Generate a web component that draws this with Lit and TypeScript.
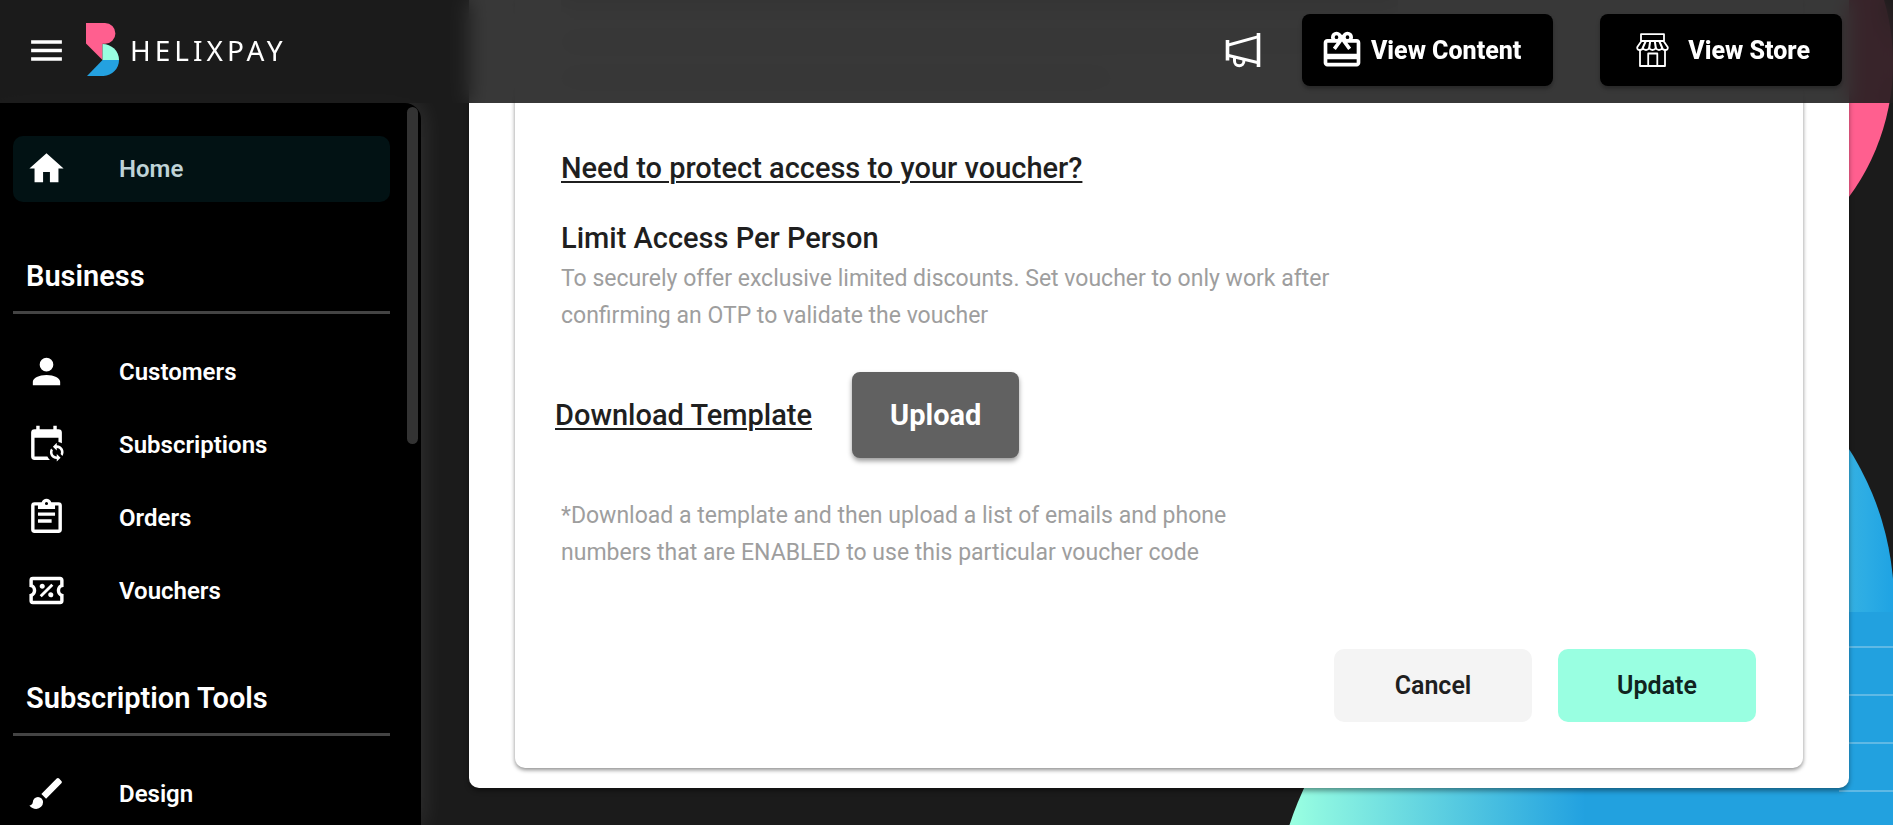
import { LitElement, html, css, svg } from "lit";
import { customElement } from "lit/decorators.js";
import { classMap } from "lit/directives/class-map.js";

interface NavItem {
  label: string;
  icon: string;
  active?: boolean;
}

interface NavSection {
  title: string;
  items: NavItem[];
}

const ICONS = {
  menu: "M3,6H21V8H3V6M3,11H21V13H3V11M3,16H21V18H3V16Z",
  home: "M10,20V14H14V20H19V12H22L12,3L2,12H5V20H10Z",
  account:
    "M12,4A4,4 0 0,1 16,8A4,4 0 0,1 12,12A4,4 0 0,1 8,8A4,4 0 0,1 12,4M12,14C16.42,14 20,15.79 20,18V20H4V18C4,15.79 7.58,14 12,14Z",
  calendarSync:
    "M18,11V12.5C21.19,12.5 23.09,16.05 21.33,18.71L20.24,17.62C21.06,15.96 19.85,14 18,14V15.5L15.75,13.25L18,11M18,22V20.5C14.81,20.5 12.91,16.95 14.67,14.29L15.76,15.38C14.94,17.04 16.15,19 18,19V17.5L20.25,19.75L18,22M19,3H18V1H16V3H8V1H6V3H5A2,2 0 0,0 3,5V19A2,2 0 0,0 5,21H14C13.36,20.45 12.86,19.77 12.5,19H5V8H19V10.59C19.71,10.7 20.39,10.94 21,11.31V5A2,2 0 0,0 19,3Z",
  clipboard:
    "M19,3H14.82C14.4,1.84 13.3,1 12,1C10.7,1 9.6,1.84 9.18,3H5A2,2 0 0,0 3,5V19A2,2 0 0,0 5,21H19A2,2 0 0,0 21,19V5A2,2 0 0,0 19,3M12,2.9A0.9,0.9 0 0,1 12.9,3.8A0.9,0.9 0 0,1 12,4.7A0.9,0.9 0 0,1 11.1,3.8A0.9,0.9 0 0,1 12,2.9M7,7H17V5H19V19H5V5H7V7M7,9H17V11H7V9M7,13H15V15H7V13Z",
  voucher:
    "M14.8,8L16,9.2L9.2,16L8,14.8L14.8,8M4,4H20C21.11,4 22,4.89 22,6V10A2,2 0 0,0 20,12A2,2 0 0,0 22,14V18A2,2 0 0,1 20,20H4A2,2 0 0,1 2,18V14C3.11,14 4,13.11 4,12A2,2 0 0,0 2,10V6A2,2 0 0,1 4,4M4,6V8.54C5.24,9.26 6,10.57 6,12C6,13.43 5.24,14.75 4,15.46V18H20V15.46C18.76,14.74 18,13.43 18,12C18,10.57 18.76,9.25 20,8.54V6H4M9.5,8C10.33,8 11,8.67 11,9.5C11,10.33 10.33,11 9.5,11C8.67,11 8,10.33 8,9.5C8,8.67 8.67,8 9.5,8M14.5,13C15.33,13 16,13.67 16,14.5A1.5,1.5 0 0,1 14.5,16C13.67,16 13,15.33 13,14.5A1.5,1.5 0 0,1 14.5,13Z",
  brush:
    "M20.71,4.63L19.37,3.29C19,2.9 18.35,2.9 17.96,3.29L9,12.25L11.75,15L20.71,6.04C21.1,5.65 21.1,5 20.71,4.63M7,14A3,3 0 0,0 4,17C4,18.31 2.84,19 2,19C2.92,20.22 4.5,21 6,21A4,4 0 0,0 10,17A3,3 0 0,0 7,14Z",
  gift: "M20,14H4V8H9.08L7,10.83L8.62,12L11,8.76L12,7.4L13,8.76L15.38,12L17,10.83L14.92,8H20M20,19H4V17H20M9,4A1,1 0 0,1 10,5A1,1 0 0,1 9,6A1,1 0 0,1 8,5A1,1 0 0,1 9,4M15,4A1,1 0 0,1 16,5A1,1 0 0,1 15,6A1,1 0 0,1 14,5A1,1 0 0,1 15,4M20,6H17.82C17.93,5.69 18,5.35 18,5A3,3 0 0,0 15,2C13.95,2 13.04,2.54 12.5,3.35L12,4L11.5,3.34C10.96,2.54 10.05,2 9,2A3,3 0 0,0 6,5C6,5.35 6.07,5.69 6.18,6H4C2.89,6 2,6.89 2,8V19C2,20.11 2.89,21 4,21H20C21.11,21 22,20.11 22,19V8C22,6.89 21.11,6 20,6Z",
};

const icon = (path: string) => html`
  <svg class="icon" viewBox="0 0 24 24" aria-hidden="true"><path d=${path} /></svg>
`;

const SECTIONS: NavSection[] = [
  { title: "", items: [{ label: "Home", icon: ICONS.home, active: true }] },
  {
    title: "Business",
    items: [
      { label: "Customers", icon: ICONS.account },
      { label: "Subscriptions", icon: ICONS.calendarSync },
      { label: "Orders", icon: ICONS.clipboard },
      { label: "Vouchers", icon: ICONS.voucher },
    ],
  },
  { title: "Subscription Tools", items: [{ label: "Design", icon: ICONS.brush }] },
];

@customElement("app-backdrop")
class AppBackdrop extends LitElement {
  static styles = css`
    :host {
      display: block;
    }
    .art {
      display: block;
      width: 640px;
      height: 840px;
    }
  `;

  render() {
    return html`
      <svg class="art" viewBox="0 0 640 840" aria-hidden="true">
        <defs>
          <linearGradient id="pool" gradientUnits="userSpaceOnUse" x1="40" y1="0" x2="332" y2="0">
            <stop offset="0" stop-color="#99ffe1" />
            <stop offset="0.08" stop-color="#8ef6e1" />
            <stop offset="1" stop-color="#22a1e0" />
          </linearGradient>
          <linearGradient id="dome" gradientUnits="userSpaceOnUse" x1="596" y1="0" x2="640" y2="0">
            <stop offset="0" stop-color="#34b0e2" />
            <stop offset="0.4" stop-color="#2cace4" />
            <stop offset="1" stop-color="#1fa3e3" />
          </linearGradient>
        </defs>
        <circle cx="414" cy="63" r="226" fill="#ff5f8f" />
        <circle cx="355" cy="603" r="286" fill="url(#dome)" />
        <circle cx="322" cy="917" r="300" fill="url(#pool)" />
        <rect x="331" y="612" width="309" height="228" fill="#22a1df" />
        ${[647, 695, 743, 791].map(
          (y) => svg`<rect x="586" y=${y - 1} width="54" height="2" fill="#5fb9e5" />`
        )}
      </svg>
    `;
  }
}

@customElement("app-sidebar")
class AppSidebar extends LitElement {
  static styles = css`
    :host {
      display: block;
      position: relative;
      overflow: hidden;
      background: #000;
      border-top-right-radius: 16px;
      box-shadow: 0 0 24px rgba(255, 255, 255, 0.12);
    }
    .nav {
      padding: 33px 31px 0 13px;
    }
    .title {
      margin: 54px 0 25px;
      padding: 0 13px 15px;
      border-bottom: 3px solid #444;
      color: #fff;
      font-size: 29px;
      font-weight: 600;
      line-height: 40px;
    }
    .list {
      display: grid;
      gap: 7px;
      margin: 0;
      padding: 0;
      list-style: none;
    }
    .item {
      display: flex;
      align-items: center;
      gap: 52px;
      height: 65px;
      padding: 0 13px 1px;
      border-radius: 10px;
      color: #fff;
      font-size: 24px;
      font-weight: 600;
      text-decoration: none;
    }
    .item.active {
      background: #021214;
    }
    .item.active .label {
      color: #bfd3d7;
    }
    .icon {
      flex: none;
      width: 41px;
      height: 41px;
      fill: #fff;
    }
    .thumb {
      position: absolute;
      top: 4px;
      right: 3px;
      width: 11px;
      height: 337px;
      border-radius: 6px;
      background: #333;
    }
  `;

  render() {
    return html`
      <nav class="nav">
        ${SECTIONS.map(
          (section) => html`
            ${section.title ? html`<h2 class="title">${section.title}</h2>` : ""}
            <ul class="list">
              ${section.items.map(
                (item) => html`
                  <li>
                    <a class=${classMap({ item: true, active: !!item.active })} href="#">
                      ${icon(item.icon)}<span class="label">${item.label}</span>
                    </a>
                  </li>
                `
              )}
            </ul>
          `
        )}
      </nav>
      <div class="thumb"></div>
    `;
  }
}

@customElement("app-header")
class AppHeader extends LitElement {
  static styles = css`
    :host {
      display: flex;
      align-items: center;
      box-sizing: border-box;
      height: 103px;
      padding: 0 51px 3px 26px;
      background: rgba(27, 27, 27, 0.873);
      backdrop-filter: blur(10px);
      color: #fff;
    }
    button {
      padding: 0;
      border: 0;
      background: none;
      color: inherit;
      font: inherit;
      cursor: pointer;
    }
    .icon {
      display: block;
      width: 41px;
      height: 41px;
      fill: currentColor;
    }
    .brand {
      display: flex;
      align-items: center;
      gap: 10px;
      margin: 0 auto 0 19px;
      color: #fff;
      text-decoration: none;
    }
    .mark {
      width: 34px;
      height: 54px;
    }
    .name {
      font-family: "Noto Sans", sans-serif;
      font-size: 28px;
      line-height: 36px;
      letter-spacing: 4px;
    }
    .news {
      margin-right: 41px;
    }
    .horn {
      display: block;
      width: 36px;
      height: 36px;
    }
    .actions {
      display: flex;
      gap: 47px;
    }
    .action {
      display: flex;
      align-items: center;
      height: 72px;
      border-radius: 8px;
      background: #000;
      box-shadow: 0 3px 4px rgba(0, 0, 0, 0.3);
      font-size: 25px;
      font-weight: 800;
    }
    .content {
      gap: 7px;
      padding: 0 32px 0 18px;
    }
    .content .icon {
      width: 44px;
      height: 44px;
    }
    .store {
      gap: 19px;
      padding: 0 32px 0 36px;
    }
    .shop {
      width: 33px;
      height: 34px;
    }
  `;

  render() {
    return html`
      <button aria-label="Menu">${icon(ICONS.menu)}</button>
      <a class="brand" href="#">
        <svg class="mark" viewBox="0 0 34 54" aria-hidden="true">
          <path d="M0 0H19A10.400 10.400 0 0 1 19 20.800H16.500V37L0 20.500Z" fill="#ff5f8f" />
          <path d="M16.500 21A16.300 16 0 0 1 33 37H16.500Z" fill="#99ffe1" />
          <path d="M16.500 37H33A16.300 16 0 0 1 17.500 53H1Z" fill="#24a1e0" />
        </svg>
        <span class="name">HELIXPAY</span>
      </a>
      <button class="news" aria-label="Announcements">
        <svg class="horn" viewBox="0 0 36 36" fill="none" stroke="#fff" aria-hidden="true">
          <path d="M2.500 8V28.500M33.500 1V35" stroke-width="3.600" />
          <path d="M2.500 13.200L33.500 4.600M2.500 23.200L33.500 30.800" stroke-width="3" />
          <path d="M9.500 25V29A4.700 4.700 0 0 0 18.900 29V27.500" stroke-width="3" />
        </svg>
      </button>
      <div class="actions">
        <button class="action content">${icon(ICONS.gift)}<span>View Content</span></button>
        <button class="action store">
          <svg
            class="shop"
            viewBox="0 0 33 34"
            fill="none"
            stroke="#fff"
            stroke-width="1.800"
            stroke-linejoin="round"
            aria-hidden="true"
          >
            <path d="M5 8V1.200H28V8M4 16V33H29V16M12.200 33V20.500H21.300V33" />
            <path d="M5.500 8H27.500L31.800 14.200Q32 17 29.300 17Q26.600 17 26.300 14.800Q25.500 17 23 17Q20.600 17 19.800 14.800Q19 17 16.500 17Q14 17 13.200 14.800Q12.400 17 10 17Q7.500 17 6.700 14.800Q6.400 17 3.700 17Q1 17 1.200 14.200Z" />
            <path d="M9.800 8L6.700 15M14.200 8L13.200 15M18.800 8L19.800 15M23.200 8L26.300 15" stroke-width="2" />
          </svg>
          <span>View Store</span>
        </button>
      </div>
    `;
  }
}

@customElement("voucher-access")
class VoucherAccess extends LitElement {
  static styles = css`
    :host {
      display: block;
      padding: 0 46px 20px;
      border-radius: 0 0 10px 10px;
      background: #fff;
      box-shadow: 0 3px 5px rgba(0, 0, 0, 0.4);
      color: #1f1f1f;
    }
    .sheet {
      padding: 0 47px 46px 46px;
      border-radius: 0 0 10px 10px;
      box-shadow: 0 2px 4px rgba(0, 0, 0, 0.45);
    }
    .lines {
      display: grid;
      align-content: start;
      gap: 24px;
      height: 148px;
    }
    .line {
      height: 12px;
      width: 70%;
      background: #e4e4e4;
    }
    .line.last {
      width: 46%;
    }
    .heading {
      margin: 0;
      font-size: 29px;
      font-weight: 500;
      line-height: 40px;
    }
    a {
      color: inherit;
      text-decoration-thickness: 2px;
      text-underline-offset: 3px;
    }
    .limit {
      margin-top: 30px;
    }
    .copy {
      margin: 2px 0 0;
      color: #9e9e9e;
      font-size: 23px;
      line-height: 37px;
    }
    .transfer {
      display: flex;
      align-items: center;
      gap: 40px;
      margin: 38px 0 39px -6px;
    }
    button {
      border: 0;
      border-radius: 8px;
      font: inherit;
      cursor: pointer;
    }
    .upload {
      height: 86px;
      padding: 0 38px;
      background: #616161;
      box-shadow: 0 3px 5px rgba(0, 0, 0, 0.4);
      color: #fff;
      font-size: 29px;
      font-weight: 700;
    }
    .footer {
      display: flex;
      justify-content: flex-end;
      gap: 26px;
      margin-top: 78px;
    }
    .choice {
      width: 198px;
      height: 73px;
      border-radius: 10px;
      background: #f4f4f4;
      color: #1f1f1f;
      font-size: 25px;
      font-weight: 600;
    }
    .primary {
      background: #99ffe1;
      color: #10241e;
    }
  `;

  render() {
    return html`
      <section class="sheet">
        <div class="lines" aria-hidden="true">
          <div class="line"></div>
          <div class="line"></div>
          <div class="line last"></div>
        </div>
        <h2 class="heading"><a href="#">Need to protect access to your voucher?</a></h2>
        <h3 class="heading limit">Limit Access Per Person</h3>
        <p class="copy">
          To securely offer exclusive limited discounts. Set voucher to only work after<br />
          confirming an OTP to validate the voucher
        </p>
        <div class="transfer">
          <a class="heading" href="#">Download Template</a>
          <button class="upload">Upload</button>
        </div>
        <p class="copy">
          *Download a template and then upload a list of emails and phone<br />
          numbers that are ENABLED to use this particular voucher code
        </p>
        <div class="footer">
          <button class="choice">Cancel</button>
          <button class="choice primary">Update</button>
        </div>
      </section>
    `;
  }
}

@customElement("app-root")
class AppRoot extends LitElement {
  static styles = css`
    :host {
      display: block;
      position: relative;
      height: 100vh;
      overflow: hidden;
      background: #1b1b1b;
      font-family: Roboto, sans-serif;
    }
    .backdrop {
      position: absolute;
      top: 0;
      right: 0;
    }
    .header {
      position: absolute;
      inset: 0 0 auto;
      z-index: 2;
    }
    .layout {
      display: grid;
      grid-template-columns: 421px minmax(0, 1fr);
      height: 100%;
      position: relative;
    }
    .sidebar {
      margin-top: 103px;
    }
    .main {
      padding: 0 44px 0 48px;
    }
  `;

  render() {
    return html`
      <app-backdrop class="backdrop"></app-backdrop>
      <div class="layout">
        <app-sidebar class="sidebar"></app-sidebar>
        <main class="main"><voucher-access></voucher-access></main>
      </div>
      <app-header class="header"></app-header>
    `;
  }
}
